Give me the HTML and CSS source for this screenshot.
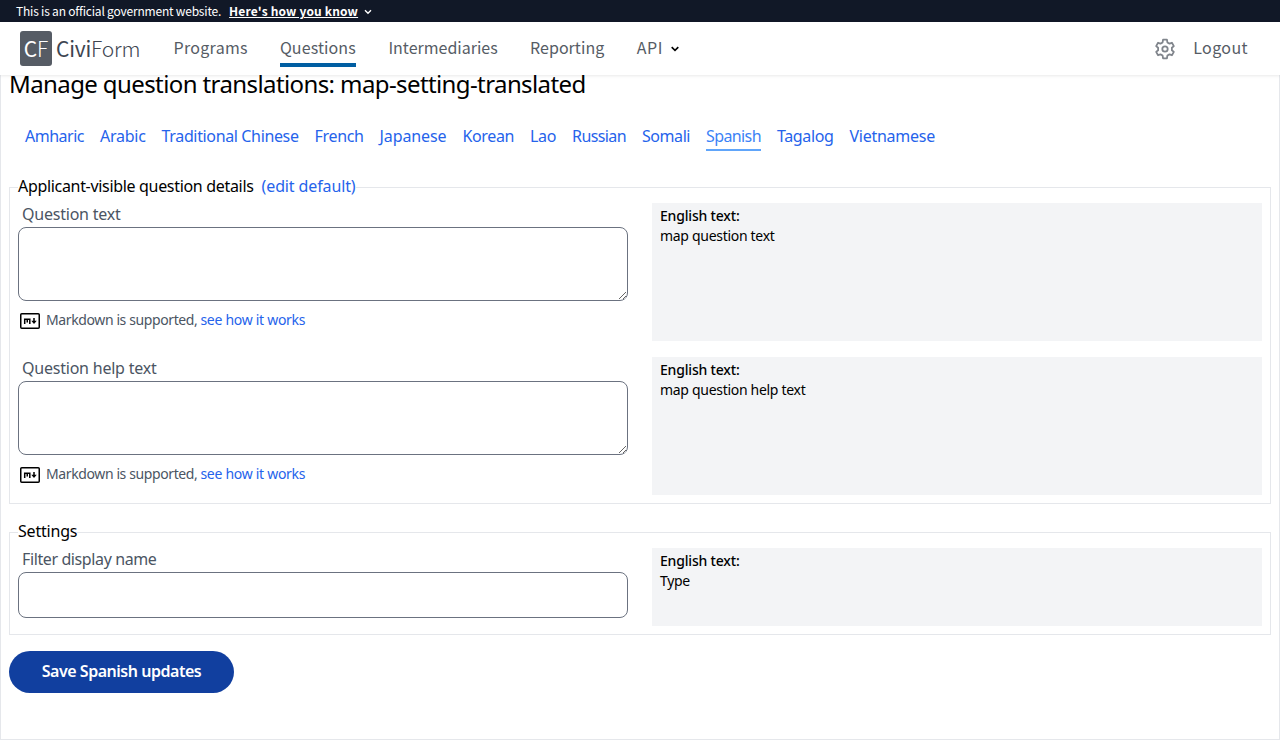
FILE: index.html
```html
<!DOCTYPE html>
<html lang="en">
<head>
<meta charset="utf-8">
<title>Manage question translations</title>
<link rel="stylesheet" href="styles.css">
</head>
<body>
<div class="banner"><span class="banner-text">This is an official government website.</span><a class="banner-link">Here's how you know</a><svg class="banner-chevron" viewBox="0 0 8 6"><path d="M1 1.2 4 4.2 7 1.2"/></svg></div>
<header class="header">
  <div class="logo"><span class="logo-mark"><span class="logo-c">C</span><span class="logo-f">F</span></span><span class="logo-name"><span class="logo-civi">Civi</span><span class="logo-form">Form</span></span></div>
  <nav class="nav">
    <a class="nav-link nav-programs">Programs</a>
    <a class="nav-link nav-questions active">Questions</a>
    <a class="nav-link nav-intermediaries">Intermediaries</a>
    <a class="nav-link nav-reporting">Reporting</a>
    <a class="nav-link nav-api">API</a>
    <svg class="nav-chevron" viewBox="0 0 8 6"><path d="M.7 1.1 4 4.3 7.3 1.1"/></svg>
  </nav>
  <svg class="gear" viewBox="0 0 24 24"><path d="M10.050 2.700H13.950L14.390 5.420 16.500 6.640 18.910 5.780 20.840 9.130 18.890 10.780V13.220L20.840 14.870 18.910 18.220 16.500 17.360 14.390 18.580 13.950 21.300H10.050L9.610 18.580 7.500 17.360 5.090 18.220 3.160 14.870 5.110 13.220V10.780L3.160 9.130 5.090 5.780 7.500 6.640 9.610 5.420Z"/><circle cx="12" cy="12" r="2.700"/></svg>
  <a class="nav-link logout">Logout</a>
</header>
<main class="main">
  <h1 class="title">Manage question translations: map-setting-translated</h1>
  <div class="tabs">
    <a class="tab amharic">Amharic</a><a class="tab arabic">Arabic</a><a class="tab chinese">Traditional Chinese</a><a class="tab french">French</a><a class="tab japanese">Japanese</a><a class="tab korean">Korean</a><a class="tab lao">Lao</a><a class="tab russian">Russian</a><a class="tab somali">Somali</a><a class="tab spanish selected">Spanish</a><a class="tab tagalog">Tagalog</a><a class="tab vietnamese">Vietnamese</a>
  </div>
  <fieldset class="group">
    <legend><span class="legend-text">Applicant-visible question details</span><a class="edit">(edit default)</a></legend>
    <div class="grid">
      <div class="field"><label class="label">Question text</label><textarea class="input area"></textarea>
        <div class="hint"><svg class="md" viewBox="0 0 20 16"><rect x=".75" y=".75" width="18.500" height="14.500" rx="1"/><path d="M4.700 11V6.200H9.800V11M7.250 6V9.500M14 5V9"/><path class="md-head" d="M11.300 7.800H16.700L14 11Z"/></svg><span class="hint-text">Markdown is supported,</span><a class="hint-link">see how it works</a></div></div>
      <div class="source"><b class="source-title">English text:</b><span class="source-text">map question text</span></div>
      <div class="field"><label class="label">Question help text</label><textarea class="input area"></textarea>
        <div class="hint"><svg class="md" viewBox="0 0 20 16"><rect x=".75" y=".75" width="18.500" height="14.500" rx="1"/><path d="M4.700 11V6.200H9.800V11M7.250 6V9.500M14 5V9"/><path class="md-head" d="M11.300 7.800H16.700L14 11Z"/></svg><span class="hint-text">Markdown is supported,</span><a class="hint-link">see how it works</a></div></div>
      <div class="source"><b class="source-title">English text:</b><span class="source-text">map question help text</span></div>
    </div>
  </fieldset>
  <fieldset class="group settings">
    <legend><span class="settings-title">Settings</span></legend>
    <div class="grid">
      <div class="field"><label class="label label-filter">Filter display name</label><input class="input line" type="text"></div>
      <div class="source"><b class="source-title">English text:</b><span class="source-text">Type</span></div>
    </div>
  </fieldset>
  <button class="save">Save Spanish updates</button>
</main>
</body>
</html>
```
FILE: styles.css
```css
* { box-sizing: border-box; }
body { margin: 0; background: #fff; color: #000; font: 16px/24px "Noto Sans", sans-serif; height: 740px; overflow: hidden; }
.banner { height: 22px; background: #111827; color: #fff; display: flex; align-items: center; padding-left: 16px; font: 12px/22px "Noto Sans CJK JP", sans-serif; }
.banner-text { letter-spacing: -.2px; }
.banner-link { margin-left: 8px; font-weight: 700; text-decoration: underline; letter-spacing: .16px; }
.banner-chevron { width: 8px; height: 6px; margin: 2px 0 0 6px; }
.banner-chevron path { fill: none; stroke: #fff; stroke-width: 1.4; }
.header { position: relative; z-index: 1; height: 53px; background: #fff; box-shadow: 0 1px 3px rgba(0,0,0,.09); display: flex; align-items: center; padding: 0 32px 0 20px; font-family: "Noto Sans CJK JP", sans-serif; }
.logo { display: flex; align-items: center; width: 120px; flex: none; color: #3d4551; white-space: nowrap; }
.logo-mark { flex: none; width: 32px; height: 35px; border-radius: 3px; background: #565c65; color: #fff; font-size: 21px; line-height: 35px; display: flex; justify-content: center; }
.logo-f { font-weight: 300; }
.logo-form { font-weight: 300; }
.logo-name { margin-left: 4px; font-size: 21px; line-height: 35px; height: 35px; letter-spacing: -.2px; }
.nav { display: flex; align-items: center; margin-left: 33.5px; flex: 1; gap: 32px; }
.nav-link { font-size: 16px; line-height: 32px; height: 32px; margin-bottom: 3px; color: #565c65; }
.nav-programs { letter-spacing: .3px; }
.nav-questions { letter-spacing: .11px; }
.nav-intermediaries { margin-left: .6px; letter-spacing: 0; }
.nav-reporting { margin-left: .3px; letter-spacing: .04px; }
.nav-api { margin-left: .4px; letter-spacing: .6px; }
.logout { letter-spacing: .4px; }
.active { box-shadow: 0 4px #005ea2; }
.nav-chevron { width: 8px; height: 6px; margin-left: -24.5px; }
.nav-chevron path { fill: none; stroke: #000; stroke-width: 1.6; }
.gear { width: 24px; height: 24px; margin-right: 16px; fill: none; stroke: #80858c; stroke-width: 1.8; stroke-linejoin: round; }
.main { height: 672px; margin-top: -7px; padding: 0 8px; border: 1px solid #e5e7eb; border-top: 0; }
.title { margin: 0; font-weight: 400; font-size: 24px; line-height: 32px; letter-spacing: -.6px; }
.tabs { display: flex; gap: 16px; padding: 24px 16px 0; }
.tab { color: #2563eb; font-size: 16px; height: 27px; }
.tab.selected { color: #3b82f6; border-bottom: 2px solid #60a5fa; }
.amharic { letter-spacing: -.5px; }
.arabic { letter-spacing: -.25px; }
.chinese { letter-spacing: -.36px; }
.french { letter-spacing: -.35px; }
.japanese { letter-spacing: -.1px; }
.korean { letter-spacing: -.38px; }
.lao { letter-spacing: -.33px; }
.russian { letter-spacing: -.6px; }
.somali { letter-spacing: -.45px; }
.spanish { letter-spacing: -.6px; }
.tagalog { letter-spacing: -.37px; }
.vietnamese { letter-spacing: -.26px; }
.group { margin: 24px 0 0; padding: 4px 8px 8px; border: 1px solid #e5e7eb; min-width: 0; }
.settings { margin-top: 16px; }
legend { padding: 0; height: 24px; display: flex; line-height: 22px; }
.legend-text { letter-spacing: -.32px; }
.settings-title { letter-spacing: -.2px; }
.edit { color: #2563eb; margin-left: 8px; letter-spacing: -.12px; }
.grid { display: grid; grid-template-columns: 610px 610px; gap: 16px 24px; }
.field { display: flex; flex-direction: column; }
.label { color: #4b5563; padding: 0 0 2px 4px; line-height: 22px; letter-spacing: -.22px; }
.label-filter { letter-spacing: -.39px; }
.input { display: block; width: 100%; margin: 0; border: 1px solid #6b7280; border-radius: 8px; background: #fff; }
.area { height: 74px; resize: vertical; }
.line { height: 46px; margin-bottom: 8px; }
.hint { display: flex; align-items: center; margin-top: 9px; padding-left: 2px; height: 20px; font-size: 14px; line-height: 20px; color: #4b5563; }
.md { width: 20px; height: 16px; margin: 2px 6px 0 0; fill: none; stroke: #000; stroke-width: 1.5; }
.md-head { fill: #000; stroke: none; }
.hint-text { letter-spacing: -.39px; }
.hint-link { color: #2563eb; margin-left: 3px; letter-spacing: -.29px; }
.source { min-height: 78px; background: #f3f4f6; padding: 3px 8px; font-size: 14px; line-height: 20px; display: flex; flex-direction: column; align-items: flex-start; }
.field:has(.area) + .source { height: 138px; }
.source-title { font-weight: 500; letter-spacing: -.18px; }
.source-text { letter-spacing: -.3px; }
.save { display: block; margin: 16px 0 0; width: 225px; height: 42px; border: 0; border-radius: 21px; background: #113f9f; color: #fff; font: 600 16px/24px "Noto Sans", sans-serif; letter-spacing: -.47px; padding: 0 0 2px; }
```
